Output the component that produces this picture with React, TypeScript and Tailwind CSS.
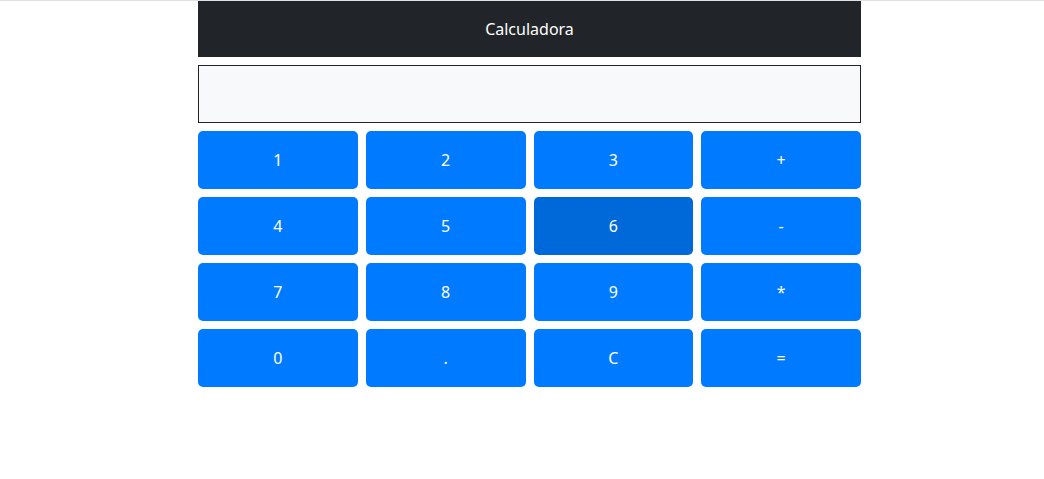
const keys = ["1", "2", "3", "+", "4", "5", "6", "-", "7", "8", "9", "*", "0", ".", "C", "="];

export default function App() {
  return (
    <div className="min-h-[479px] bg-white border-t border-[#dee2e6] font-['Noto_Sans',sans-serif]">
      <div className="ml-[198px] w-[663px] flex flex-col gap-2">
        <header className="h-14 bg-[#212529] flex items-center justify-center text-white text-base">
          Calculadora
        </header>
        <div className="h-[58px] bg-[#f8f9fa] border border-[#212529]" />
        <div className="grid grid-cols-4 gap-2">
          {keys.map((k) => (
            <button
              key={k}
              className={
                "h-[58px] rounded-[5px] text-white text-base flex items-center justify-center " +
                (k === "6" ? "bg-[#0069d9]" : "bg-[#007bff]")
              }
            >
              {k}
            </button>
          ))}
        </div>
      </div>
    </div>
  );
}
